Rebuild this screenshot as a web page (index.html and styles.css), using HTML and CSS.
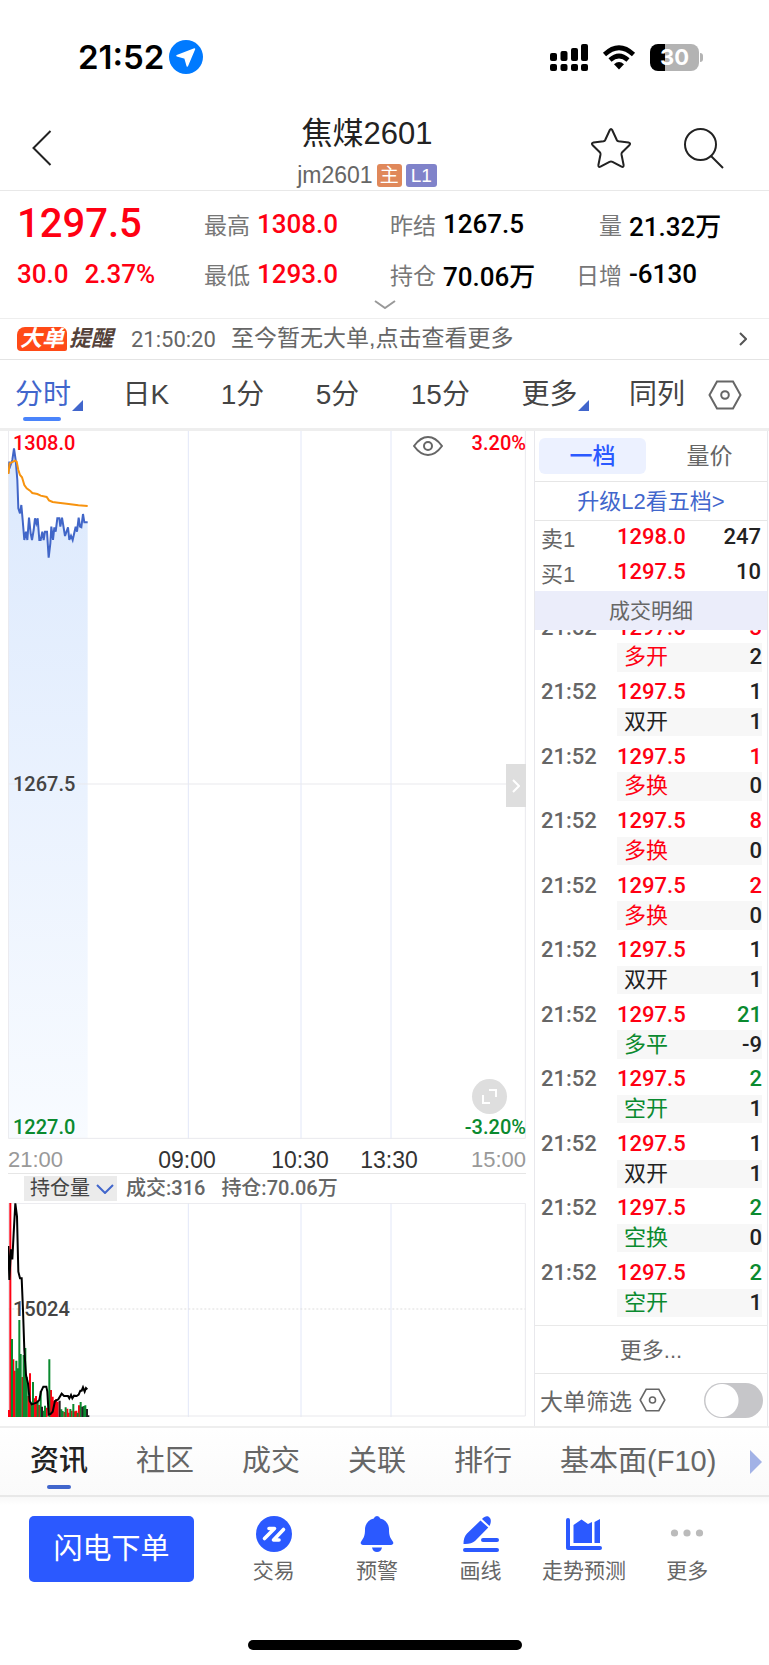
FILE: index.html
```html
<!DOCTYPE html>
<html lang="zh-CN">
<head>
	<meta charset="UTF-8">
	<meta name="viewport" content="width=device-width, initial-scale=1">
	<title>焦煤2601</title>
	<link rel="stylesheet" href="styles.css">
</head>
<body>
	<!-- 状态栏 -->
	<div class="status">
		<span class="status-time">21:52</span>
		<svg class="status-loc" width="34" height="34" viewBox="0 0 34 34"><circle cx="17" cy="17" r="17" fill="#007aff"/><path d="M25.5 9 18.3 26 16 18 8 15.800z" fill="#fff" stroke="#fff" stroke-width="1.500" stroke-linejoin="round"/></svg>
		<svg class="status-signal" width="38" height="27" viewBox="0 0 38 27"><g><rect x="0" y="9" width="7" height="8" rx="2"/><rect x="10.500" y="7" width="7" height="10" rx="2"/><rect x="21" y="4" width="7" height="13" rx="2"/><rect x="31" y="0" width="7" height="17" rx="2"/><rect x="0" y="20" width="7" height="7" rx="2"/><rect x="10.500" y="20" width="7" height="7" rx="2"/><rect x="21" y="20" width="7" height="7" rx="2"/><rect x="31" y="20" width="7" height="7" rx="2"/></g></svg>
		<svg class="status-wifi" width="34" height="25" viewBox="0 0 34 25"><path d="M2.500 9.500Q17-4 31.500 9.500M8 15Q17 7 26 15" fill="none" stroke="#000" stroke-width="4.600"/><path d="M12 19.200Q17 15 22 19.200L17 24.500z"/></svg>
		<span class="battery"><span class="battery-num">30</span></span>
	</div>

	<!-- 标题 -->
	<div class="header">
		<a class="back" href="#" aria-label="返回"><svg width="20" height="36" viewBox="0 0 20 36"><path d="M18.500 1 1.500 18 18.500 35"/></svg></a>
		<div class="header-title">
			<h1>焦煤2601</h1>
			<p>jm2601<span class="tag tag-main">主</span><span class="tag tag-level">L1</span></p>
		</div>
		<div class="header-tools">
			<button type="button" aria-label="自选"><svg width="42" height="42" viewBox="0 0 42 42"><path d="M19.800 3Q21 .8 22.200 3L26.800 13Q27.300 14 28.500 14.300L38.500 15.600Q41.200 16.200 39.300 18.300L32.200 25.200Q31.300 26.200 31.500 27.500L33.600 38Q33.800 40.700 31.500 39.700L22.500 34.800Q21 34 19.500 34.800L10.500 39.700Q8.200 40.700 8.400 38L10.500 27.500Q10.700 26.200 9.800 25.200L2.700 18.300Q.8 16.200 3.500 15.600L13.500 14.300Q14.700 14 15.200 13z"/></svg></button>
			<button type="button" aria-label="搜索"><svg width="42" height="42" viewBox="0 0 42 42"><circle cx="17.500" cy="17.500" r="15.500"/><path d="M28 29 40 41"/></svg></button>
		</div>
	</div>

	<!-- 行情 -->
	<div class="quote">
		<div class="quote-cell last">1297.5</div>
		<div class="quote-cell"><span>最高</span><b class="red">1308.0</b></div>
		<div class="quote-cell"><span>昨结</span><b>1267.5</b></div>
		<div class="quote-cell"><span class="right">量</span><b>21.32万</b></div>
		<div class="quote-cell"><b class="red">30.0</b><b class="red percent">2.37%</b></div>
		<div class="quote-cell"><span>最低</span><b class="red">1293.0</b></div>
		<div class="quote-cell"><span>持仓</span><b>70.06万</b></div>
		<div class="quote-cell"><span class="right">日增</span><b>-6130</b></div>
		<svg class="quote-more" width="22" height="9" viewBox="0 0 22 9"><path d="M1 1 11 8 21 1"/></svg>
	</div>

	<!-- 大单提醒 -->
	<a class="notice" href="#">
		<span class="notice-logo"><i class="notice-big">大单</i><i class="notice-tip">提醒</i></span>
		<span class="notice-time">21:50:20</span>
		<span class="notice-text">至今暂无大单,点击查看更多</span>
		<svg width="8" height="14" viewBox="0 0 8 14"><path d="M1 1 7 7 1 13"/></svg>
	</a>

	<!-- 周期 -->
	<div class="period">
		<a class="on corner" href="#">分时</a>
		<a href="#">日K</a>
		<a href="#">1分</a>
		<a href="#">5分</a>
		<a href="#">15分</a>
		<a class="corner" href="#">更多</a>
		<div class="period-set">
			<a href="#">同列</a>
			<button type="button" aria-label="设置"><svg width="34" height="30" viewBox="0 0 34 30"><path d="M9 1.500H25L32.500 15 25 28.500H9L1.500 15z"/><circle cx="17" cy="15" r="3.800"/></svg></button>
		</div>
	</div>

	<div class="main">
		<div class="charts">
			<!-- 分时图 -->
			<div class="chart">
				<svg class="plot plot-price" viewBox="24 33 1554 2124" preserveAspectRatio="none">
					<defs>
						<linearGradient id="fill" x1="0" y1="0" x2="0" y2="1"><stop offset="0" stop-color="#dce9fd"/><stop offset="1" stop-color="#f8fbff"/></linearGradient>
					</defs>
					<path fill="url(#fill)" d="M25 2154V160L28 125 31 137 37 120 42 85 47 120 52 180 55 265 60 280 64 255 68 300 73 360 78 335 82 360 87 293 92 340 96 360 101 330 105 295 109 310 113 295 118 360 122 360 127 335 131 360 135 335 141 335 146 413 151 370 154 320 159 360 163 322 167 335 172 295 178 295 181 320 186 293 195 348 204 322 208 360 213 347 218 360 227 320 231 335 236 293 240 320 244 322 249 282 253 307 263 307V2154z"/>
					<path class="grid" d="M565 33V2157M903 33V2157M1173 33V2157"/>
					<path class="frame" d="M25 33V2155H1576V33M25 1092H1576"/>
					<path class="price" d="M25 160 28 125 31 137 37 120 42 85 47 120 52 180 55 265 60 280 64 255 68 300 73 360 78 335 82 360 87 293 92 340 96 360 101 330 105 295 109 310 113 295 118 360 122 360 127 335 131 360 135 335 141 335 146 413 151 370 154 320 159 360 163 322 167 335 172 295 178 295 181 320 186 293 195 348 204 322 208 360 213 347 218 360 227 320 231 335 236 293 240 320 244 322 249 282 253 307 263 307"/>
					<path class="average" d="M25 162 29 130 35 127 45 122 50 125 55 150 60 165 66 172 73 195 80 205 90 212 97 219 112 222 122 227 140 231 147 241 158 246 175 248 200 251 235 256 263 258"/>
				</svg>
				<span class="mark mark-high red">1308.0</span>
				<span class="mark mark-middle">1267.5</span>
				<span class="mark mark-low green">1227.0</span>
				<span class="mark mark-up red">3.20%</span>
				<span class="mark mark-down green">-3.20%</span>
				<button type="button" class="eye" aria-label="显示"><svg width="30" height="20" viewBox="0 0 30 20"><path d="M1 10Q7.500 1 15 1T29 10Q22.500 19 15 19T1 10z"/><circle cx="15" cy="10" r="4"/></svg></button>
				<button type="button" class="fold" aria-label="收起"><svg width="8" height="14" viewBox="0 0 8 14"><path d="M1 1 7 7 1 13"/></svg></button>
				<button type="button" class="expand" aria-label="全屏"><svg width="15" height="15" viewBox="0 0 15 15"><path d="M7 1H14V8M1 6V14H8"/></svg></button>
			</div>
			<div class="axis">
				<span class="muted">21:00</span>
				<span>09:00</span>
				<span>10:30</span>
				<span>13:30</span>
				<span class="muted">15:00</span>
			</div>
			<!-- 持仓量 -->
			<div class="volume-head">
				<button type="button">持仓量<svg width="18" height="10" viewBox="0 0 18 10"><path d="M1 1 9 9 17 1"/></svg></button>
				<span>成交:316</span>
				<span>持仓:70.06万</span>
			</div>
			<div class="chart">
				<svg class="plot plot-volume" viewBox="24 249 1554 642" preserveAspectRatio="none">
					<path class="grid" d="M565 249V891M903 249V891M1173 249V891"/>
					<path class="frame" d="M25 250H1576V888H25z"/>
					<path class="dots" d="M25 567H1576"/>
				</svg>
				<span class="mark mark-volume">15024</span>
				<svg class="plot plot-volume plot-top" viewBox="24 249 1554 642" preserveAspectRatio="none">
					<path class="bar-red" d="M26 891V870M31 891V249M40 891V718M44 891V752M67 891V771M85 891V828M90 891V760M104 891V835M108 891V828M117 891V855M140 891V863M153 891V810M158 891V830M163 891V843M168 891V838M173 891V845M193 891V876M202 891V866M206 891V878M215 891V872M225 891V874M229 891V872M237 891V856"/>
					<path class="bar-green" d="M36 891V657M49 891V722M53 891V745M58 891V600M62 891V702M71 891V705M76 891V684M80 891V771M95 891V850M99 891V786M113 891V842M122 891V813M131 891V872M135 891V857M148 891V718M184 891V868M188 891V873M197 891V862M211 891V867M220 891V852M233 891V878M242 891V846M251 891V858M256 891V856"/>
					<path class="bar-black" d="M126 891V860M179 891V842M247 891V860M261 891V867M265 891V886"/>
					<path class="position" d="M25 378 28 480 33 388 37 418 41 340 46 250 51 290 55 455 60 475 65 475 69 570 73 690 78 765 84 790 89 843 95 853 110 848 118 840 123 815 130 800 139 800 142 815 146 884 152 882 158 875 165 843 175 838 185 821 192 828 204 828 208 835 213 825 217 835 222 827 230 828 236 824 241 812 245 812 249 802 254 815 258 804 262 808"/>
				</svg>
			</div>
		</div>

		<!-- 盘口 -->
		<div class="side">
			<div class="side-tabs">
				<button type="button" class="on">一档</button>
				<button type="button">量价</button>
			</div>
			<a class="upgrade" href="#">升级L2看五档&gt;</a>
			<table class="book">
				<tr><th>卖1</th><td class="red">1298.0</td><td>247</td></tr>
				<tr><th>买1</th><td class="red">1297.5</td><td>10</td></tr>
			</table>
			<div class="side-title">成交明细</div>
			<div class="trades">
				<table>
					<tr><td>21:52</td><td class="red">1297.5</td><td class="red">3</td></tr>
					<tr class="kind"><td></td><td class="red">多开</td><td>2</td></tr>
					<tr><td>21:52</td><td class="red">1297.5</td><td>1</td></tr>
					<tr class="kind"><td></td><td>双开</td><td>1</td></tr>
					<tr><td>21:52</td><td class="red">1297.5</td><td class="red">1</td></tr>
					<tr class="kind"><td></td><td class="red">多换</td><td>0</td></tr>
					<tr><td>21:52</td><td class="red">1297.5</td><td class="red">8</td></tr>
					<tr class="kind"><td></td><td class="red">多换</td><td>0</td></tr>
					<tr><td>21:52</td><td class="red">1297.5</td><td class="red">2</td></tr>
					<tr class="kind"><td></td><td class="red">多换</td><td>0</td></tr>
					<tr><td>21:52</td><td class="red">1297.5</td><td>1</td></tr>
					<tr class="kind"><td></td><td>双开</td><td>1</td></tr>
					<tr><td>21:52</td><td class="red">1297.5</td><td class="green">21</td></tr>
					<tr class="kind"><td></td><td class="green">多平</td><td>-9</td></tr>
					<tr><td>21:52</td><td class="red">1297.5</td><td class="green">2</td></tr>
					<tr class="kind"><td></td><td class="green">空开</td><td>1</td></tr>
					<tr><td>21:52</td><td class="red">1297.5</td><td>1</td></tr>
					<tr class="kind"><td></td><td>双开</td><td>1</td></tr>
					<tr><td>21:52</td><td class="red">1297.5</td><td class="green">2</td></tr>
					<tr class="kind"><td></td><td class="green">空换</td><td>0</td></tr>
					<tr><td>21:52</td><td class="red">1297.5</td><td class="green">2</td></tr>
					<tr class="kind"><td></td><td class="green">空开</td><td>1</td></tr>
				</table>
			</div>
			<a class="side-more" href="#">更多...</a>
			<div class="filter">
				<label for="filter">大单筛选</label>
				<svg width="27" height="24" viewBox="0 0 34 30"><path d="M9 1.500H25L32.500 15 25 28.500H9L1.500 15z"/><circle cx="17" cy="15" r="3.800"/></svg>
				<input type="checkbox" id="filter" class="switch">
			</div>
		</div>
	</div>

	<!-- 资讯导航 -->
	<div class="news">
		<a class="on" href="#">资讯</a>
		<a href="#">社区</a>
		<a href="#">成交</a>
		<a href="#">关联</a>
		<a href="#">排行</a>
		<a href="#">基本面(F10)</a>
		<svg width="12" height="24" viewBox="0 0 12 24"><path d="M0 0 12 12 0 24z"/></svg>
	</div>

	<!-- 底部工具栏 -->
	<div class="toolbar">
		<button type="button" class="order">闪电下单</button>
		<a href="#"><svg width="36" height="36" viewBox="0 0 36 36"><circle cx="18" cy="18" r="18"/><path d="M8.500 22.500 18.500 12.500H13M27.500 13.500 17.500 24H23" fill="none" stroke="#fff" stroke-width="3.600" stroke-linecap="round" stroke-linejoin="round"/></svg>交易</a>
		<a href="#"><svg width="36" height="36" viewBox="0 0 36 36"><path d="M18 0Q20.500 0 21.200 2.600C27 4 30 8.500 30 13.500 30 20 31.500 22 33.800 25.500 35 27.500 34 29 32 29H4C2 29 1 27.500 2.200 25.500 4.500 22 6 20 6 13.500 6 8.500 9 4 14.800 2.600Q15.500 0 18 0zM13 31.500H23Q22 36 18 36T13 31.500z"/></svg>预警</a>
		<a href="#"><svg width="36" height="36" viewBox="0 0 36 36"><path d="M17.500 4.500 25.300 11.500 12 25Q8 28.500.5 28 .5 21 4 17.500zM19 3C22-.5 25-.5 26.500 1.500 28.500 3.500 28 6.500 26.500 10z"/><path d="M20 24H34M2 34H34" stroke="#2b59ff" stroke-width="4" stroke-linecap="round"/></svg>画线</a>
		<a href="#"><svg width="36" height="36" viewBox="0 0 36 36"><path d="M7.500 9 15.500 3.500 22 8 26 6V27H7.500zM28.500 6 34 3V27H28.500z"/><path d="M2 4V32H34" fill="none" stroke="#2b59ff" stroke-width="4" stroke-linecap="round" stroke-linejoin="round"/></svg>走势预测</a>
		<a href="#"><svg class="gray" width="36" height="36" viewBox="0 0 36 36"><circle cx="5.500" cy="17" r="3.600"/><circle cx="18" cy="17" r="3.600"/><circle cx="30.500" cy="17" r="3.600"/></svg>更多</a>
	</div>
	<div class="home"></div>
</body>
</html>
```
FILE: styles.css
```css
* {
    box-sizing: border-box;
}
body, h1, p, table {
    margin: 0;
    padding: 0;
}
body {
    background: #fff;
    color: #222;
    font-family: "Liberation Sans", "Noto Sans CJK SC", sans-serif;
    font-size: 22px;
}
a {
    color: inherit;
    text-decoration: none;
}
button {
    border: 0;
    padding: 0;
    background: none;
    color: inherit;
    font: inherit;
}
svg {
    display: block;
    flex: none;
}
.red {
    color: #ff0012;
}
.green {
    color: #0a8a2f;
}

/* 状态栏 */
.status {
    display: flex;
    align-items: center;
    height: 114px;
    padding: 0 70px 0 78px;
    color: #000;
}
.status-time {
    font: 600 33px/40px Inter, sans-serif;
}
.status-loc {
    margin-left: 5px;
}
.status-signal {
    margin-left: auto;
}
.status-wifi {
    margin: 0 14px;
}
.battery {
    position: relative;
    width: 49px;
    height: 27px;
    border-radius: 8px;
    background: linear-gradient(90deg, #000 15px, #b3b3b3 15px);
    color: #fff;
    text-align: center;
}
.battery:after {
    content: "";
    position: absolute;
    right: -4px;
    top: 9px;
    width: 3px;
    height: 9px;
    border-radius: 0 3px 3px 0;
    background: #b3b3b3;
}
.battery-num {
    font: 700 22px/27px Inter, sans-serif;
}

/* 标题 */
.header {
    display: grid;
    grid-template-columns: 297fr auto 332fr;
    height: 77px;
    border-bottom: 1px solid #e8e8e8;
}
.header svg {
    fill: none;
    stroke: #222;
    stroke-width: 2;
}
.back {
    padding: 16px 32px;
}
.header-title {
    text-align: center;
}
.header-title h1 {
    font-weight: 400;
    font-size: 31px;
    line-height: 40px;
}
.header-title p {
    display: flex;
    align-items: center;
    gap: 4px;
    color: #666;
    font-size: 23px;
    line-height: 24px;
    margin-top: 9px;
}
.tag {
    height: 23px;
    padding: 0 3px;
    border-radius: 3px;
    color: #fff;
    font-size: 19px;
    line-height: 23px;
}
.tag-main {
    background: #e0885a;
}
.tag-level {
    background: #8083ca;
    padding: 0 5px;
}
.header-tools {
    display: flex;
    justify-content: flex-end;
    align-items: flex-start;
    gap: 51px;
    padding: 13px 44px 0 0;
}

/* 行情 */
.quote {
    position: relative;
    display: grid;
    grid-template-columns: 187fr 186fr 188fr 191fr;
    grid-auto-rows: 50px;
    height: 128px;
    padding: 8px 0 0 17px;
    border-bottom: 1px solid #eee;
}
.quote-cell {
    display: flex;
    align-items: center;
    gap: 7px;
    white-space: nowrap;
}
.quote-cell span {
    color: #777;
    font-size: 23px;
}
.quote-cell .right {
    width: 44px;
    display: flex;
    justify-content: flex-end;
}
.quote-cell b {
    font-family: Roboto, "Noto Sans CJK SC", sans-serif;
    font-weight: 500;
    font-size: 26px;
    color: #000;
}
.quote-cell .red {
    color: #ff0012;
}
.quote .last {
    color: #ff0012;
    font: 500 40px/50px Roboto, sans-serif;
}
.quote-cell .percent {
    margin-left: 9px;
}
.quote-more {
    position: absolute;
    left: 50%;
    bottom: 9px;
    margin-left: -11px;
    fill: none;
    stroke: #999;
    stroke-width: 2;
}

/* 大单提醒 */
.notice {
    display: flex;
    align-items: center;
    height: 41px;
    padding: 0 22px 0 17px;
    border-bottom: 1px solid #e4e4e4;
    color: #666;
}
.notice-logo {
    display: flex;
    gap: 2px;
    width: 98px;
    font-weight: 700;
    font-size: 22px;
    line-height: 24px;
}
.notice-big {
    width: 50px;
    border-radius: 8px 6px 2px 4px;
    background: #ff4a17;
    color: #fff;
    text-align: center;
}
.notice-tip {
    color: #54423a;
}
.notice-time {
    width: 84px;
    margin-left: 16px;
    font-family: Roboto, sans-serif;
    font-size: 22px;
}
.notice-text {
    margin-left: 16px;
    font-size: 23px;
    line-height: 36px;
    height: 38px;
}
.notice svg {
    margin-left: auto;
    fill: none;
    stroke: #555;
    stroke-width: 2;
}

/* 周期 */
.period {
    display: flex;
    align-items: center;
    justify-content: space-between;
    height: 71px;
    padding: 2px 27px 0 15px;
    border-bottom: 3px solid #eee;
    color: #444;
    font-size: 28px;
    line-height: 66px;
}
.period-set {
    display: flex;
    align-items: center;
    gap: 23px;
}
.period a {
    position: relative;
}
.period .on {
    color: #4166cc;
}
.period .on:before {
    content: "";
    position: absolute;
    left: 8px;
    bottom: 7px;
    width: 38px;
    height: 4px;
    border-radius: 2px;
    background: #4a84fb;
}
.corner:after {
    content: "";
    position: absolute;
    right: -12px;
    bottom: 17px;
    border-left: 11px solid transparent;
    border-bottom: 11px solid #4166cc;
}
.period svg, .filter svg {
    fill: none;
    stroke: #666;
    stroke-width: 2;
}

.main {
    display: grid;
    grid-template-columns: 534fr 235fr;
    border-bottom: 2px solid #eee;
}

/* 图表 */
.charts {
    padding: 0 8px;
}
.chart {
    position: relative;
}
.plot {
    width: 100%;
}
.plot path {
    vector-effect: non-scaling-stroke;
}
.plot-price {
    height: 708px;
}
.plot-volume {
    height: 214px;
}
.plot-top {
    position: absolute;
    top: 0;
    left: 0;
}
.grid {
    stroke: #e2e7f8;
}
.frame, .price, .average, .dots, .position {
    fill: none;
}
.frame {
    stroke: #e9e9ed;
}
.price {
    stroke: #4166c8;
    stroke-width: 2;
}
.average {
    stroke: #f7930f;
    stroke-width: 2;
}
.dots {
    stroke: #ddd;
    stroke-dasharray: 2 2;
}
.position {
    stroke: #000;
    stroke-width: 2;
}
.bar-red, .bar-green, .bar-black {
    stroke-width: 2;
}
.bar-red {
    stroke: #ff0012;
}
.bar-green {
    stroke: #0a8a2f;
}
.bar-black {
    stroke: #222;
}
.mark {
    position: absolute;
    font: 500 20px/24px Roboto, sans-serif;
}
.mark-high {
    top: 0;
    left: 5px;
}
.mark-middle {
    top: 341px;
    left: 5px;
    color: #444;
}
.mark-low {
    bottom: 0;
    left: 5px;
}
.mark-up {
    top: 0;
    right: 0;
}
.mark-down {
    bottom: 0;
    right: 0;
}
.mark-volume {
    top: 94px;
    left: 5px;
    color: #444;
}
.eye, .fold, .expand {
    position: absolute;
    display: flex;
    align-items: center;
    justify-content: center;
    fill: none;
    stroke: #666;
    stroke-width: 2;
}
.eye {
    top: 5px;
    right: 83px;
}
.fold {
    top: 333px;
    right: 0;
    width: 20px;
    height: 43px;
    background: #dedede;
    stroke: #fff;
}
.expand {
    right: 19px;
    bottom: 25px;
    width: 35px;
    height: 35px;
    border-radius: 50%;
    background: #dedede;
    stroke: #fff;
}
.axis {
    display: grid;
    grid-template-columns: 123fr 112fr 114fr 64fr 105fr;
    height: 35px;
    border-bottom: 1px solid #e6e6e6;
    color: #333;
    font-size: 23px;
    line-height: 42px;
    text-align: center;
}
.axis .muted {
    color: #999;
    font-size: 22px;
    text-align: right;
}
.axis .muted:first-child {
    text-align: left;
}
.volume-head {
    display: flex;
    align-items: center;
    gap: 16px;
    height: 29px;
    padding-left: 16px;
    color: #666;
    font: 500 20px/25px Roboto, "Noto Sans CJK SC", sans-serif;
}
.volume-head button {
    display: flex;
    align-items: center;
    gap: 6px;
    height: 25px;
    padding: 0 3px 0 6px;
    margin-right: -7px;
    background: #ebebeb;
    color: #444;
    font-size: 20px;
    font-weight: 400;
}
.volume-head svg {
    fill: none;
    stroke: #4166cc;
    stroke-width: 2;
}

/* 盘口 */
.side {
    border-left: 1px solid #e8e8ec;
    border-right: 1px solid #e8e8ec;
    margin-right: 1px;
    text-align: center;
    font-size: 21px;
    color: #666;
}
.side-tabs {
    display: grid;
    grid-template-columns: 1fr 1fr;
    gap: 10px;
    padding: 7px 4px;
    border-bottom: 1px solid #e6e6e6;
    font-size: 23px;
    line-height: 36px;
}
.side-tabs .on {
    border-radius: 6px;
    background: #ecf1ff;
    color: #2b59ff;
    font-weight: 500;
}
.upgrade {
    display: block;
    height: 39px;
    border-bottom: 1px solid #e6e6e6;
    color: #4166cc;
    font-size: 22px;
    line-height: 40px;
}
.side table {
    width: 100%;
    border-collapse: collapse;
    table-layout: fixed;
}
.side td, .side th {
    padding: 0;
    font-weight: 400;
    text-align: left;
    white-space: nowrap;
}
.side td {
    font: 500 22px/28px Roboto, "Noto Sans CJK SC", sans-serif;
}
.side td:last-child {
    text-align: right;
    color: #222;
}
.side td.red:last-child {
    color: #ff0012;
}
.side td.green:last-child {
    color: #0a8a2f;
}
.side td:first-child, .side th {
    width: 82px;
    padding-left: 6px;
}
.side th {
    padding-bottom: 3px;
    font-size: 22px;
}
.side td:nth-child(2) {
    width: 86px;
}
.book tr {
    height: 35px;
}
.book td {
    padding-bottom: 3px;
}
.book td:last-child {
    padding-right: 6px;
}
.side-title {
    height: 39px;
    background: #ebedfa;
    line-height: 39px;
}
.trades {
    display: flex;
    align-items: flex-end;
    height: 696px;
    padding: 0 5px 8px 0;
    border-bottom: 1px solid #e9e9e9;
    overflow: hidden;
}
.trades table {
    height: 710px;
}
.trades tr {
    height: 36px;
}
.trades td {
    padding-top: 5px;
}
.trades .kind {
    height: 28px;
}
.trades .kind td {
    padding-top: 0;
    line-height: 28px;
    color: #222;
}
.trades .kind td:nth-child(2) {
    padding-left: 7px;
    font-weight: 400;
}
.trades .kind td:not(:first-child) {
    background: #f7f7f7;
}
.trades .kind .red {
    color: #ff0012;
}
.trades .kind .green {
    color: #0a8a2f;
}
.side-more {
    display: block;
    height: 48px;
    border-bottom: 1px solid #e6e6e6;
    font-size: 22px;
    line-height: 50px;
}
.filter {
    display: flex;
    align-items: center;
    gap: 7px;
    height: 52px;
    padding: 0 4px 0 5px;
    font-size: 23px;
}
.switch {
    appearance: none;
    width: 59px;
    height: 35px;
    margin: 0 0 0 auto;
    border-radius: 18px;
    background: radial-gradient(circle at 18px 50%, #fff 16px, transparent 17px) #c6c6c9;
}

/* 资讯导航 */
.news {
    display: flex;
    align-items: center;
    gap: 48px;
    height: 69px;
    padding: 0 7px 0 30px;
    border-bottom: 2px solid #e8e8e8;
    background: linear-gradient(#fff, #fafafa);
    color: #666;
    font-size: 29px;
    line-height: 67px;
    white-space: nowrap;
}
.news a {
    position: relative;
}
.news .on {
    color: #222;
    font-weight: 500;
}
.news .on:after {
    content: "";
    position: absolute;
    left: 50%;
    bottom: 6px;
    width: 24px;
    height: 4px;
    margin-left: -12px;
    border-radius: 2px;
    background: #4166cc;
}
.news svg {
    margin-left: auto;
    fill: #a2b2e6;
}
.news a:nth-child(6) {
    margin-right: -48px;
}

/* 底部工具栏 */
.toolbar {
    display: flex;
    align-items: flex-start;
    padding: 19px 30px 0 29px;
    background: linear-gradient(#f8f8f8, #fff 8px);
    color: #666;
    font-size: 21px;
    line-height: 32px;
}
.order {
    width: 165px;
    height: 66px;
    margin-right: 28px;
    border-radius: 5px;
    background: #2b59ff;
    color: #fff;
    font-size: 29px;
}
.toolbar a {
    display: flex;
    flex: 1 1 0;
    flex-direction: column;
    align-items: center;
    gap: 3px;
    white-space: nowrap;
}
.toolbar svg {
    fill: #2b59ff;
}
.toolbar .gray {
    fill: #bbb;
}
.home {
    width: 274px;
    height: 10px;
    margin: 53px auto 16px;
    border-radius: 5px;
    background: #000;
}
```
